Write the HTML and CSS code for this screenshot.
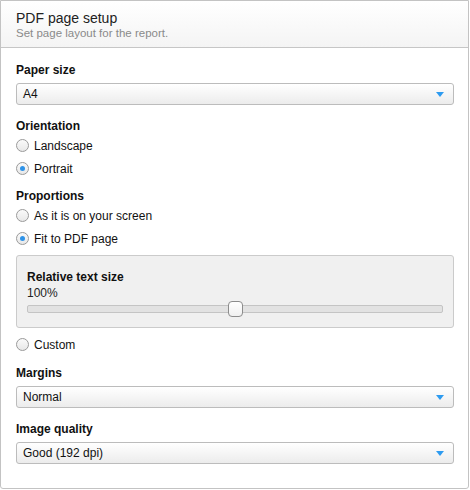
FILE: index.html
```html
<!DOCTYPE html>
<html lang="en">
<head>
  <meta charset="UTF-8">
  <title>PDF page setup</title>
  <link rel="stylesheet" href="styles.css">
</head>
<body>

<div class="panel">
  <div class="panel-header">
    <div class="title">PDF page setup</div>
    <div class="subtitle">Set page layout for the report.</div>
  </div>

  <div class="panel-body">
    <div class="field-label first">Paper size</div>
    <div class="select">
      <span>A4</span>
      <svg class="arrow" width="8" height="5" viewBox="0 0 8 5"><path d="M0 0H8L4 5Z"/></svg>
    </div>

    <div class="field-label">Orientation</div>
    <div class="radio-group">
      <label class="radio"><span class="dot"></span>Landscape</label>
      <label class="radio checked"><span class="dot"></span>Portrait</label>
    </div>

    <div class="field-label tight">Proportions</div>
    <div class="radio-group">
      <label class="radio"><span class="dot"></span>As it is on your screen</label>
      <label class="radio checked"><span class="dot"></span>Fit to PDF page</label>
    </div>

    <!-- text size slider shown for "Fit to PDF page" -->
    <div class="sub-box">
      <div class="sub-label">Relative text size</div>
      <div class="sub-value">100%</div>
      <div class="slider">
        <div class="track"></div>
        <div class="thumb" style="left: 50%"></div>
      </div>
    </div>

    <label class="radio custom"><span class="dot"></span>Custom</label>

    <div class="field-label margins">Margins</div>
    <div class="select">
      <span>Normal</span>
      <svg class="arrow" width="8" height="5" viewBox="0 0 8 5"><path d="M0 0H8L4 5Z"/></svg>
    </div>

    <div class="field-label">Image quality</div>
    <div class="select">
      <span>Good (192 dpi)</span>
      <svg class="arrow" width="8" height="5" viewBox="0 0 8 5"><path d="M0 0H8L4 5Z"/></svg>
    </div>
  </div>
</div>

</body>
</html>
```

FILE: styles.css
```css
body {
  margin: 0;
  font-family: "Liberation Sans", Arial, sans-serif;
  font-size: 12px;
  color: #1a1a1a;
  background: #fff;
}

.panel {
  width: 469px;
  height: 489px;
  box-sizing: border-box;
  border: 1px solid #c3c3c3;
  border-radius: 0 0 3px 3px;
}

.panel-header {
  height: 47px;
  box-sizing: border-box;
  padding: 9px 15px 0;
  background: linear-gradient(#fff, #f4f4f4);
  border-bottom: 1px solid #c6c6c6;
}

.title {
  font-size: 14px;
  line-height: 17px;
  color: #222;
}

.subtitle {
  font-size: 11.5px;
  line-height: 13px;
  color: #8a8a8a;
}

.panel-body {
  padding: 13px 14px 0 15px;
}

.field-label {
  font-weight: bold;
  line-height: 16px;
  padding-top: 1px;
  margin-bottom: -1px;
  margin-top: 12px;
  color: #111;
}

.field-label.first {
  margin-top: 0;
}

.field-label.tight {
  margin-top: 7px;
}

.field-label.margins {
  margin-top: 8px;
}

/* dropdowns */
.select {
  position: relative;
  height: 22px;
  box-sizing: border-box;
  margin-top: 6px;
  padding-left: 6px;
  line-height: 20px;
  border: 1px solid #bcbcbc;
  border-radius: 3px;
  background: linear-gradient(#fff, #ececec);
  color: #111;
}

.select .arrow {
  position: absolute;
  right: 9px;
  top: 8px;
  fill: #2d9bf0;
}

/* radio buttons */
.radio-group {
  padding-top: 1px;
}

.radio {
  display: flex;
  align-items: center;
  height: 23px;
  color: #111;
}

.radio .dot {
  width: 13px;
  height: 13px;
  box-sizing: border-box;
  margin-right: 5px;
  border: 1px solid #9a9a9a;
  border-radius: 50%;
  background: linear-gradient(#fafafa, #e8e8e8);
  display: flex;
  align-items: center;
  justify-content: center;
}

.radio.checked .dot::after {
  content: "";
  width: 5px;
  height: 5px;
  border-radius: 50%;
  background: #2f93e8;
}

.radio.custom {
  margin-top: 5px;
}

/* grey box with the text size slider */
.sub-box {
  margin-top: 5px;
  padding: 13px 10px 10px 10px;
  background: #f0f0f0;
  border: 1px solid #cbcbcb;
  border-radius: 3px;
}

.sub-label {
  font-weight: bold;
  line-height: 16px;
  color: #111;
}

.sub-value {
  line-height: 16px;
  color: #222;
}

.slider {
  position: relative;
  height: 16px;
}

.track {
  position: absolute;
  left: 0;
  right: 0;
  top: 4px;
  height: 8px;
  box-sizing: border-box;
  border: 1px solid #c4c4c4;
  border-radius: 2px;
  background: #e2e2e2;
}

.thumb {
  position: absolute;
  top: 0;
  width: 15px;
  height: 16px;
  margin-left: -7px;
  box-sizing: border-box;
  border: 1px solid #8c8c8c;
  border-radius: 4px;
  background: linear-gradient(#fff, #f0f0f0);
}
```
